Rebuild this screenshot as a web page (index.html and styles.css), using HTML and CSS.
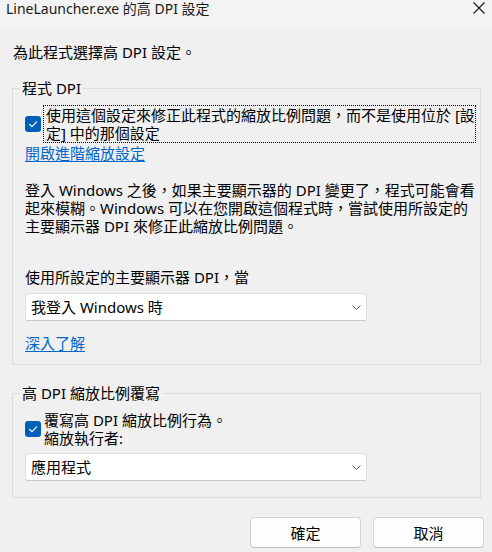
FILE: index.html
```html
<!DOCTYPE html>
<html lang="zh-Hant">
<head>
<meta charset="utf-8">
<title>LineLauncher.exe 的高 DPI 設定</title>
<link rel="stylesheet" href="styles.css">
</head>
<body>
<div class="window">
  <div class="titlebar">
    <span class="title">LineLauncher.exe 的高 DPI 設定</span>
    <svg class="close" width="12" height="12" viewBox="0 0 12 12"><path d="M0.5 0.5 L11.5 11.5 M11.5 0.5 L0.5 11.5" stroke="#1a1a1a" stroke-width="1.1" fill="none"/></svg>
  </div>
  <div class="content">
    <p class="intro">為此程式選擇高 DPI 設定。</p>

    <fieldset class="group group-program">
      <legend>程式 DPI</legend>
      <div class="check-row">
        <span class="checkbox"><svg width="16" height="16" viewBox="0 0 16 16"><path d="M4.5 8.3 L7 10.6 L11.6 5.8" stroke="#fff" stroke-width="1.2" fill="none" stroke-linecap="round" stroke-linejoin="round"/></svg></span>
        <span class="check-label focused">使用這個設定來修正此程式的縮放比例問題，而不是使用位於 [設<br>定] 中的那個設定</span>
      </div>
      <a class="link link-advanced" href="#">開啟進階縮放設定</a>
      <p class="para">登入 Windows 之後，如果主要顯示器的 DPI 變更了，程式可能會看<br>起來模糊。Windows 可以在您開啟這個程式時，嘗試使用所設定的<br>主要顯示器 DPI 來修正此縮放比例問題。</p>
      <p class="label">使用所設定的主要顯示器 DPI，當</p>
      <div class="select">
        <span>我登入 Windows 時</span>
        <svg class="chev" width="9" height="5" viewBox="0 0 9 5"><path d="M0.5 0.5 L4.5 4.5 L8.5 0.5" stroke="#606060" stroke-width="1" fill="none"/></svg>
      </div>
      <a class="link link-learn" href="#">深入了解</a>
    </fieldset>

    <fieldset class="group group-override">
      <legend>高 DPI 縮放比例覆寫</legend>
      <div class="check-row">
        <span class="checkbox"><svg width="16" height="16" viewBox="0 0 16 16"><path d="M4.5 8.3 L7 10.6 L11.6 5.8" stroke="#fff" stroke-width="1.2" fill="none" stroke-linecap="round" stroke-linejoin="round"/></svg></span>
        <span class="check-label plain">覆寫高 DPI 縮放比例行為。<br>縮放執行者:</span>
      </div>
      <div class="select select-app">
        <span>應用程式</span>
        <svg class="chev" width="9" height="5" viewBox="0 0 9 5"><path d="M0.5 0.5 L4.5 4.5 L8.5 0.5" stroke="#606060" stroke-width="1" fill="none"/></svg>
      </div>
    </fieldset>

    <div class="buttons">
      <button class="btn">確定</button>
      <button class="btn">取消</button>
    </div>
  </div>
</div>
</body>
</html>
```

FILE: styles.css
```css
* { box-sizing: border-box; }
html, body {
  margin: 0;
  padding: 0;
  background: #f0f0f0;
}
body {
  width: 492px;
  height: 552px;
  overflow: hidden;
  font-family: "Noto Sans", "Noto Sans CJK TC", sans-serif;
  font-size: 15px;
  color: #000;
}
.window {
  width: 492px;
  height: 552px;
  display: flex;
  flex-direction: column;
}
.titlebar {
  height: 27px;
  background: #f3f3f3;
  display: flex;
  align-items: flex-start;
  justify-content: space-between;
  padding: 0 7px 0 6px;
}
.title {
  font-size: 14px;
  line-height: 18px;
  color: #1a1a1a;
  white-space: nowrap;
}
.close {
  margin-top: 2px;
  display: block;
}
.content {
  flex: 1;
  display: flex;
  flex-direction: column;
}
.intro {
  margin: 16px 0 0 13px;
  line-height: 18px;
  white-space: nowrap;
}
.group {
  margin: 18px 11px 0 12px;
  padding: 8px 12px 12px 12px;
  border: 1px solid #dcdcdc;
  min-width: 0;
}
.group legend {
  padding: 0 2px;
  margin-left: -5px;
  line-height: 18px;
  white-space: nowrap;
}
.group-override {
  margin-top: 19px;
  padding-bottom: 16px;
}
.check-row {
  display: flex;
  align-items: center;
}
.checkbox {
  width: 16px;
  height: 16px;
  border-radius: 3px;
  background: #005fb8;
  flex: none;
  display: block;
}
.checkbox svg { display: block; }
.check-label {
  line-height: 18px;
  white-space: nowrap;
  border: 1px solid transparent;
  padding: 0 2px;
  margin-left: 2px;
}
.check-label.focused {
  border: 1px dotted #000;
  width: 433px;
}
.check-label.plain {
  margin-left: 0;
}
.link {
  display: block;
  color: #0066cc;
  text-decoration: underline;
  text-underline-offset: 2px;
  line-height: 18px;
  width: max-content;
  white-space: nowrap;
}
.link-advanced { margin-top: 1px; }
.para {
  margin: 19px 0 0;
  line-height: 18px;
  white-space: nowrap;
}
.label {
  margin: 33px 0 0;
  line-height: 18px;
  white-space: nowrap;
}
.select {
  margin-top: 7px;
  width: 342px;
  height: 28px;
  background: #fff;
  border: 1px solid #dedede;
  border-bottom-color: #c8c8c8;
  border-radius: 3px;
  display: flex;
  align-items: center;
  justify-content: space-between;
  padding: 0 5px 0 5px;
  line-height: 18px;
  white-space: nowrap;
}
.select .chev { display: block; }
.select-app { margin-top: 5px; }
.link-learn { margin-top: 13px; }
.buttons {
  margin-top: 19px;
  display: flex;
  justify-content: flex-end;
  gap: 12px;
  padding-right: 8px;
}
.btn {
  width: 111px;
  height: 31px;
  background: #fdfdfd;
  border: 1px solid #d4d4d4;
  border-bottom-color: #bdbdbd;
  border-radius: 4px;
  font-family: "Noto Sans", "Noto Sans CJK TC", sans-serif;
  font-size: 15px;
  color: #000;
  padding: 0;
  line-height: 18px;
}
```
